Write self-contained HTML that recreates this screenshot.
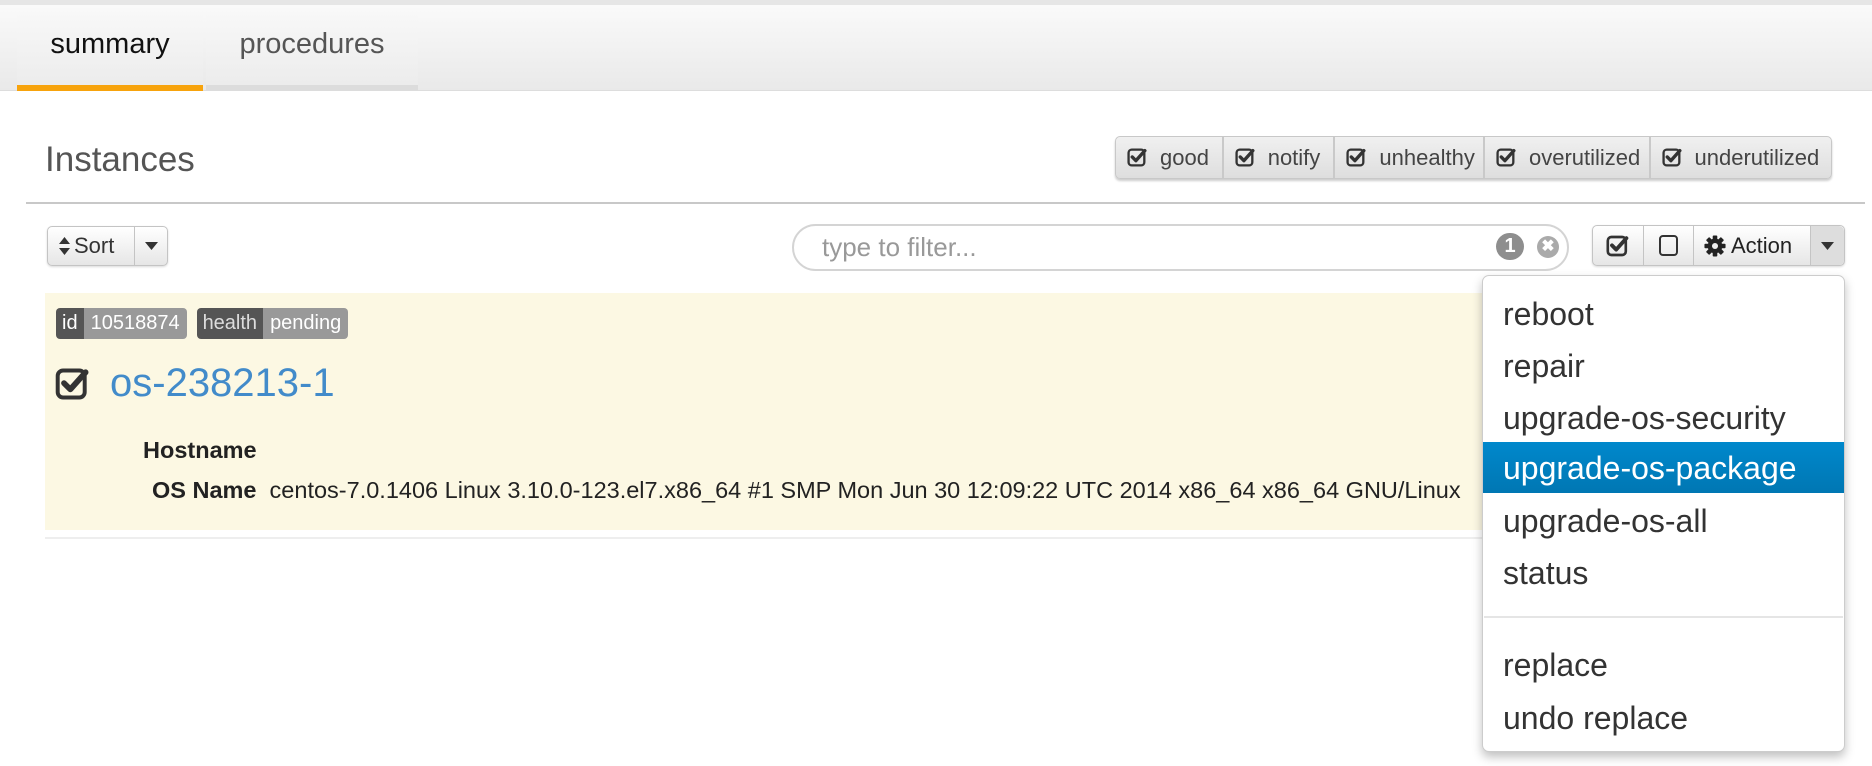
<!DOCTYPE html>
<html><head><meta charset="utf-8"><style>
*{box-sizing:border-box;margin:0;padding:0}
body{width:1872px;height:766px;background:#fff;font-family:"Liberation Sans",Arial,sans-serif;position:relative;overflow:hidden;color:#333}
.abs{position:absolute}
.topstrip{left:0;top:0;width:1872px;height:5px;background:#e6e6e6}
.bar{left:0;top:5px;width:1872px;height:86px;background:linear-gradient(#fafafa,#e9e9e9);border-bottom:1px solid #ddd}
.tab{top:12px;height:79px;background:linear-gradient(#f8f8f8,#ececec);font-size:29px;line-height:64px;text-align:center}
.btn{background:linear-gradient(#fff,#e6e6e6);border:1px solid #c4c4c4;border-radius:5px;box-shadow:0 1px 2px rgba(0,0,0,.15)}
.chips{left:1115px;top:136px;width:717px;height:43px;border-radius:5px;background:linear-gradient(#f0f0f0,#dedede);border:1px solid #c8c8c8;box-shadow:0 2px 2px rgba(0,0,0,.2);display:flex}
.chip{height:100%;border-right:2px solid #c9c9c9;font-size:22px;color:#444;display:flex;align-items:center;padding-left:11px}
.chip:last-child{border-right:none}
.chip svg{margin-right:12px}
.dd{left:1482px;top:275px;width:363px;height:477px;background:#fff;border:1px solid #ccc;border-radius:7px;box-shadow:0 5px 10px rgba(0,0,0,.25)}
.it{left:1503px;font-size:32px;color:#333;line-height:36px}
</style></head><body>
<svg width="0" height="0" style="position:absolute"><defs>
<symbol id="ck" viewBox="0 0 20 20"><rect x="1.5" y="2.5" width="15" height="15" rx="3" fill="none" stroke="#333" stroke-width="2.2"/><path d="M5 9.5 L8.5 13 L17 3.5" fill="none" stroke="#333" stroke-width="3.2" stroke-linecap="round" stroke-linejoin="round"/></symbol>
</defs></svg>
<div class="abs topstrip"></div>
<div class="abs bar"></div>
<div class="abs tab" style="left:17px;width:186px;color:#111;border-bottom:6px solid #f7a30c">summary</div>
<div class="abs tab" style="left:206px;width:212px;color:#555;border-bottom:6px solid #dcdcdc">procedures</div>

<div class="abs" style="left:45px;top:140px;font-size:35px;color:#555">Instances</div>
<div class="abs chips">
<div class="chip" style="width:108px"><svg width="21" height="21"><use href="#ck"/></svg>good</div>
<div class="chip" style="width:112px"><svg width="21" height="21"><use href="#ck"/></svg>notify</div>
<div class="chip" style="width:150px"><svg width="21" height="21"><use href="#ck"/></svg>unhealthy</div>
<div class="chip" style="width:166px"><svg width="21" height="21"><use href="#ck"/></svg>overutilized</div>
<div class="chip" style="width:181px"><svg width="21" height="21"><use href="#ck"/></svg>underutilized</div>
</div>
<div class="abs" style="left:26px;top:202px;width:1839px;height:2px;background:#c8c8c8"></div>

<div class="abs btn" style="left:47px;top:226px;width:121px;height:40px;display:flex">
<div style="width:87px;border-right:1px solid #c4c4c4;font-size:22px;line-height:38px;padding-left:10px;color:#333;display:flex;align-items:center"><svg width="13" height="20" style="margin-right:3px"><path d="M6.5 1 L12 8 H1Z M6.5 19 L12 12 H1Z" fill="#333"/></svg>Sort</div>
<div style="flex:1;display:flex;align-items:center;justify-content:center"><svg width="13" height="8"><path d="M0 0H13L6.5 8Z" fill="#333"/></svg></div>
</div>

<div class="abs" style="left:792px;top:224px;width:777px;height:47px;border:2px solid #d4d4d4;border-radius:24px;background:#fff"></div>
<div class="abs" style="left:822px;top:232px;font-size:26px;color:#999">type to filter...</div>
<div class="abs" style="left:1496px;top:233px;width:28px;height:27px;border-radius:14px;background:#8e8e8e;color:#fff;font-weight:bold;font-size:20px;text-align:center;line-height:27px">1</div>
<div class="abs" style="left:1537px;top:236px;width:22px;height:22px;border-radius:11px;background:#aaa;color:#fff;font-weight:bold;font-size:16px;text-align:center;line-height:22px">&#x2716;</div>

<div class="abs btn" style="left:1592px;top:225px;width:253px;height:41px;display:flex;align-items:center">
<div style="width:51px;height:100%;border-right:1px solid #c4c4c4;display:flex;align-items:center;justify-content:center"><svg width="24" height="24"><use href="#ck"/></svg></div>
<div style="width:50px;height:100%;border-right:1px solid #c4c4c4;display:flex;align-items:center;justify-content:center"><span style="display:inline-block;width:19px;height:21px;border:2px solid #333;border-radius:4px"></span></div>
<div style="width:117px;height:100%;border-right:1px solid #c4c4c4;font-size:22px;line-height:39px;padding-left:10px;color:#222;display:flex;align-items:center"><svg width="22" height="22" viewBox="0 0 24 24" style="margin-right:5px"><g fill="#222"><circle cx="12" cy="12" r="8"/><rect x="9.5" y="0.5" width="5" height="23" rx="1"/><rect x="9.5" y="0.5" width="5" height="23" rx="1" transform="rotate(45 12 12)"/><rect x="9.5" y="0.5" width="5" height="23" rx="1" transform="rotate(90 12 12)"/><rect x="9.5" y="0.5" width="5" height="23" rx="1" transform="rotate(135 12 12)"/></g><circle cx="12" cy="12" r="3.3" fill="#eee"/></svg>Action</div>
<div style="flex:1;background:#ddd;height:100%;border-radius:0 5px 5px 0;display:flex;align-items:center;justify-content:center"><svg width="13" height="8"><path d="M0 0H13L6.5 8Z" fill="#333"/></svg></div>
</div>

<div class="abs" style="left:45px;top:293px;width:1795px;height:237px;background:#fcf8e3"></div>
<div class="abs" style="left:45px;top:537px;width:1440px;height:2px;background:#eee"></div>
<div class="abs" style="left:56px;top:308px;height:31px;display:flex;font-size:20px;line-height:31px;color:#fff">
<span style="background:#555;padding:0 6px;border-radius:4px 0 0 4px">id</span><span style="background:#999;padding:0 7px;border-radius:0 4px 4px 0">10518874</span>
<span style="background:#555;padding:0 6px;border-radius:4px 0 0 4px;margin-left:10px;color:#ddd">health</span><span style="background:#999;padding:0 7px;border-radius:0 4px 4px 0">pending</span>
</div>
<svg class="abs" style="left:55px;top:366px" width="36" height="36"><use href="#ck"/></svg>
<div class="abs" style="left:110px;top:361px;font-size:40px;color:#428bca">os-238213-1</div>
<div class="abs" style="left:143px;top:437px;font-size:23.5px;font-weight:bold;color:#222">Hostname</div>
<div class="abs" style="left:152px;top:477px;font-size:23.5px;color:#222;white-space:nowrap"><b>OS Name</b>&nbsp; centos-7.0.1406 Linux 3.10.0-123.el7.x86_64 #1 SMP Mon Jun 30 12:09:22 UTC 2014 x86_64 x86_64 GNU/Linux</div>

<div class="abs dd"></div>
<div class="abs" style="left:1483px;top:442px;width:361px;height:51px;background:linear-gradient(#0088cc,#0077b3)"></div>
<div class="abs it" style="top:296px">reboot</div>
<div class="abs it" style="top:348px">repair</div>
<div class="abs it" style="top:400px">upgrade-os-security</div>
<div class="abs it" style="top:450px;color:#fff">upgrade-os-package</div>
<div class="abs it" style="top:503px">upgrade-os-all</div>
<div class="abs it" style="top:555px">status</div>
<div class="abs" style="left:1484px;top:616px;width:359px;height:2px;background:#e5e5e5"></div>
<div class="abs it" style="top:647px">replace</div>
<div class="abs it" style="top:700px">undo replace</div>
</body></html>
